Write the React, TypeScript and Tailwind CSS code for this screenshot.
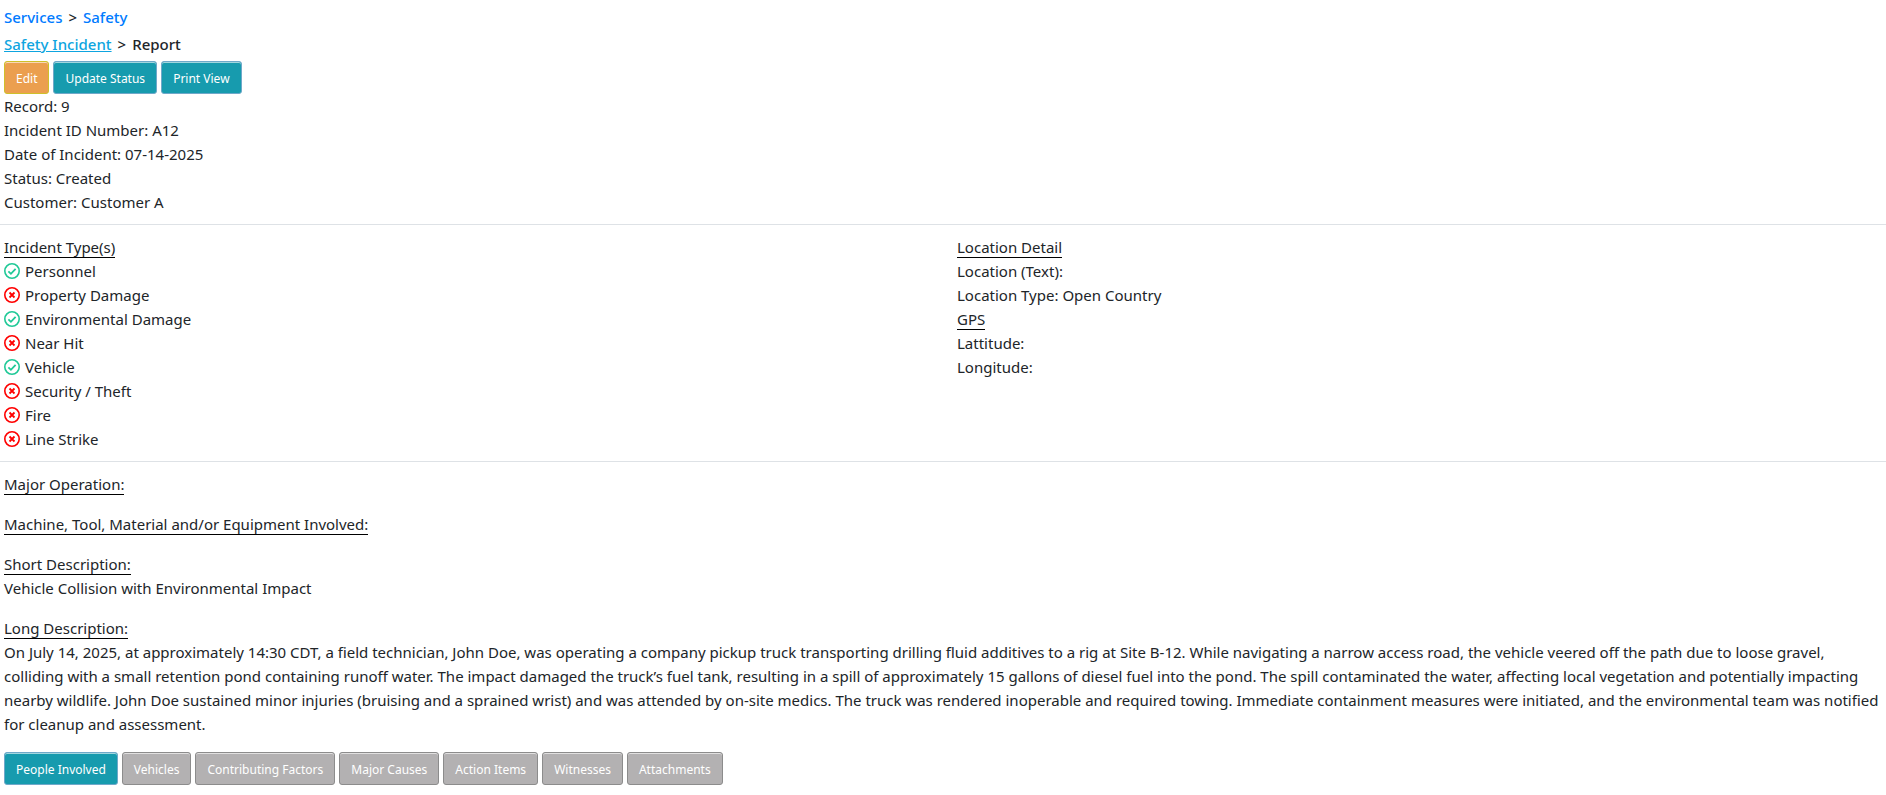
import React, { useState } from "react";

interface IncidentType {
  name: string;
  involved: boolean;
}

const incidentTypes: IncidentType[] = [
  { name: "Personnel", involved: true },
  { name: "Property Damage", involved: false },
  { name: "Environmental Damage", involved: true },
  { name: "Near Hit", involved: false },
  { name: "Vehicle", involved: true },
  { name: "Security / Theft", involved: false },
  { name: "Fire", involved: false },
  { name: "Line Strike", involved: false },
];

const tabs = [
  "People Involved",
  "Vehicles",
  "Contributing Factors",
  "Major Causes",
  "Action Items",
  "Witnesses",
  "Attachments",
];

const buttonBase =
  "h-[33px] px-[11px] pt-[2px] rounded-[3px] border text-xs leading-5 text-white whitespace-nowrap cursor-pointer shadow-[inset_0_1px_0_rgba(255,255,255,0.6)]";
const tealButton = "bg-[#179bae] border-[#6fa8c9]";
const orangeButton = "bg-[#eb9f4f] border-[#cfc02a]";
const grayButton = "bg-[#b3b1b2] border-[#8c8c8c]";

const StatusIcon = ({ involved }: { involved: boolean }) => (
  <svg
    viewBox="0 0 16 16"
    className={`size-4 shrink-0 ${involved ? "text-[#20c997]" : "text-[#ff0000]"}`}
    fill="none"
    stroke="currentColor"
    aria-hidden="true"
  >
    <circle cx="8" cy="8" r="7.2" strokeWidth="1.6" />
    {involved ? (
      <path d="M4.4 8.4 6.9 10.8 11.6 5.8" strokeWidth="1.8" />
    ) : (
      <path d="M5.5 5.5 10.5 10.5M10.5 5.5 5.5 10.5" strokeWidth="1.8" />
    )}
  </svg>
);

const Heading = ({ children }: { children: React.ReactNode }) => (
  <h2>
    <span className="border-b border-black">{children}</span>
  </h2>
);

const App = () => {
  const [activeTab, setActiveTab] = useState("People Involved");

  return (
    <div className="bg-white pt-[5px] pb-2 text-[15px] leading-6 text-[#212529] font-['Noto_Sans',sans-serif]">
      <header className="px-1">
        <nav className="mb-[3px] flex gap-[6px] font-medium">
          <a href="#services" className="text-[#007bff]">
            Services
          </a>
          <span>&gt;</span>
          <a href="#safety" className="text-[#007bff]">
            Safety
          </a>
        </nav>
        <nav className="mb-[5px] flex gap-[6px] font-medium">
          <a href="#incident" className="text-[#0ea5e0] underline">
            Safety Incident
          </a>
          <span>&gt;</span>
          <span>Report</span>
        </nav>
        <div className="flex gap-1">
          <button className={`${buttonBase} ${orangeButton}`}>Edit</button>
          <button className={`${buttonBase} ${tealButton}`}>
            Update Status
          </button>
          <button className={`${buttonBase} ${tealButton}`}>Print View</button>
        </div>
        <p>Record: 9</p>
        <p>Incident ID Number: A12</p>
        <p>Date of Incident: 07-14-2025</p>
        <p>Status: Created</p>
        <p>Customer: Customer A</p>
      </header>

      <hr className="my-[10px] border-[#dee2e6]" />

      <section className="grid grid-cols-2 px-1">
        <div>
          <Heading>Incident Type(s)</Heading>
          <ul>
            {incidentTypes.map((type) => (
              <li key={type.name} className="flex items-center gap-[5px]">
                <StatusIcon involved={type.involved} />
                {type.name}
              </li>
            ))}
          </ul>
        </div>
        <div className="pl-[14px]">
          <Heading>Location Detail</Heading>
          <p>Location (Text):</p>
          <p>Location Type: Open Country</p>
          <Heading>GPS</Heading>
          <p>Lattitude:</p>
          <p>Longitude:</p>
        </div>
      </section>

      <hr className="my-[10px] border-[#dee2e6]" />

      <main className="flex flex-col gap-4 px-1">
        <Heading>Major Operation:</Heading>
        <Heading>Machine, Tool, Material and/or Equipment Involved:</Heading>
        <div>
          <Heading>Short Description:</Heading>
          <p>Vehicle Collision with Environmental Impact</p>
        </div>
        <div>
          <Heading>Long Description:</Heading>
          <p>
            On July 14, 2025, at approximately 14:30 CDT, a field technician,
            John Doe, was operating a company pickup truck transporting drilling
            fluid additives to a rig at Site B-12. While navigating a narrow
            access road, the vehicle veered off the path due to loose gravel,
            colliding with a small retention pond containing runoff water. The
            impact damaged the truck’s fuel tank, resulting in a spill of
            approximately 15 gallons of diesel fuel into the pond. The spill
            contaminated the water, affecting local vegetation and potentially
            impacting nearby wildlife. John Doe sustained minor injuries
            (bruising and a sprained wrist) and was attended by on-site medics.
            The truck was rendered inoperable and required towing. Immediate
            containment measures were initiated, and the environmental team was
            notified for cleanup and assessment.
          </p>
        </div>
        <div className="flex flex-wrap gap-1">
          {tabs.map((tab) => (
            <button
              key={tab}
              onClick={() => setActiveTab(tab)}
              className={`${buttonBase} ${tab === activeTab ? tealButton : grayButton}`}
            >
              {tab}
            </button>
          ))}
        </div>
      </main>
    </div>
  );
};

export default App;
